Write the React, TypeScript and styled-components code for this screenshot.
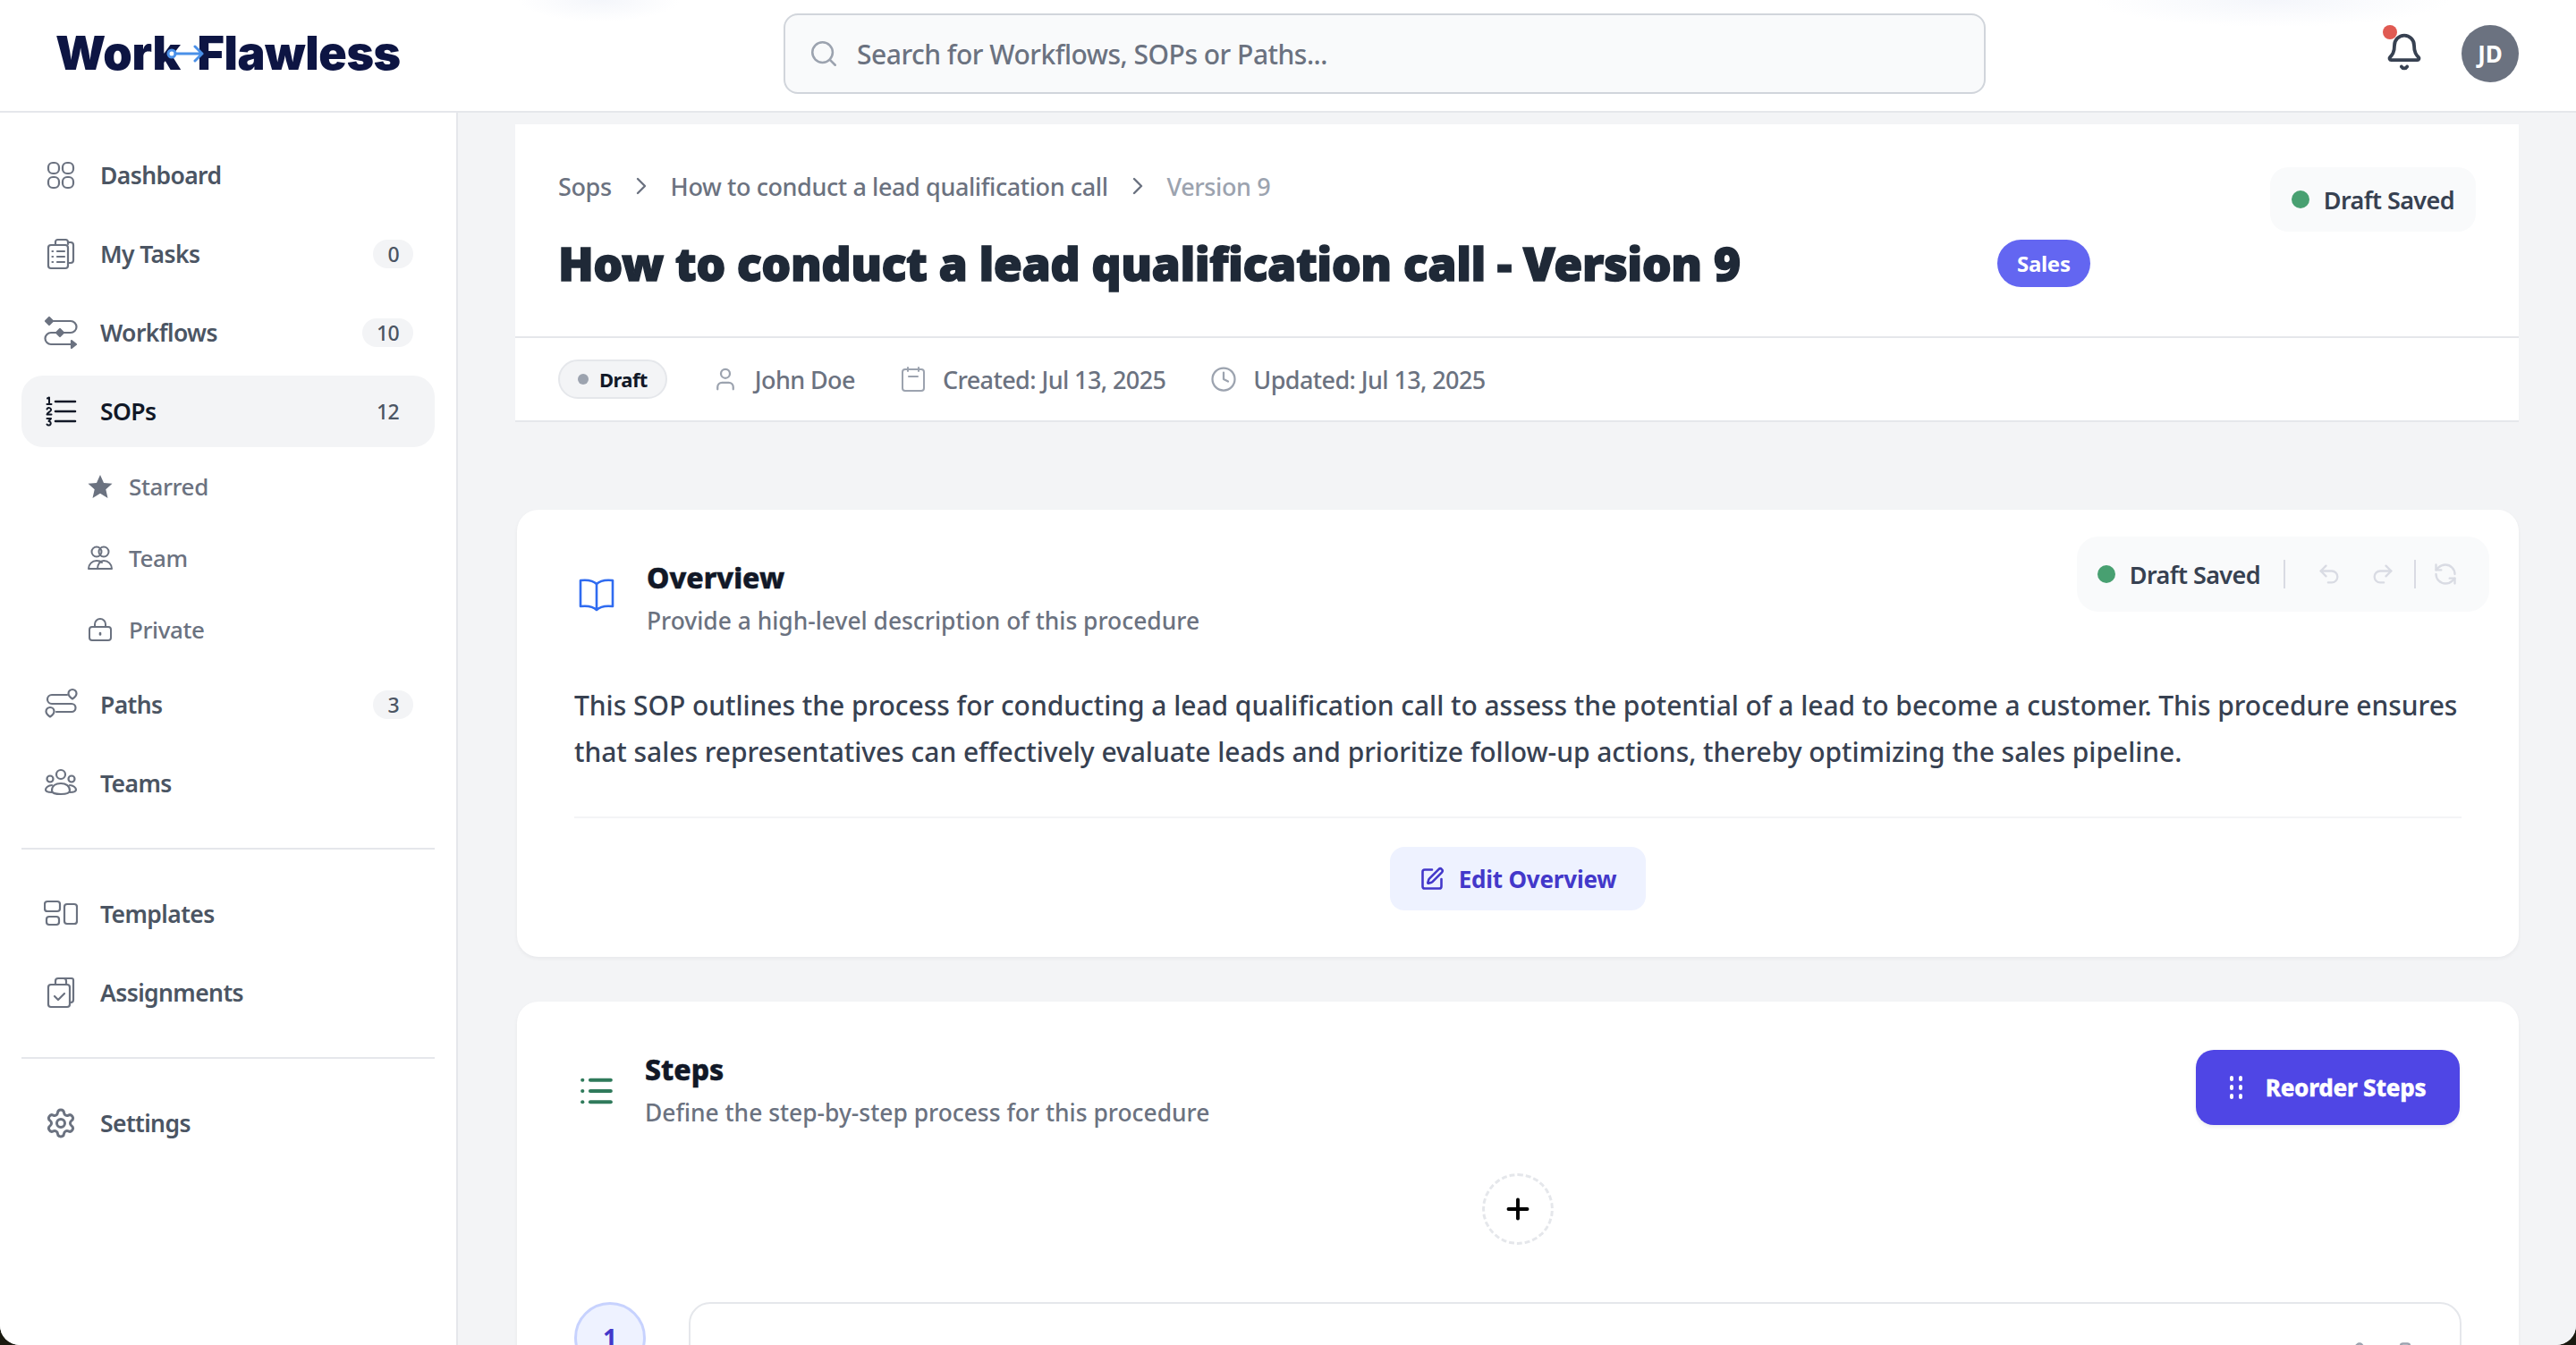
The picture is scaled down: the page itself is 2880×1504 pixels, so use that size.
import * as React from "react";
import styled, { createGlobalStyle } from "styled-components";
import {
  Bell,
  ChevronRight,
  Clock,
  List,
  Pencil,
  Plus,
  Redo2,
  RefreshCcw,
  Search,
  Settings,
  SquarePen,
  Trash2,
  Undo2,
  User,
} from "lucide-react";

const GlobalStyle = createGlobalStyle`
  html, body {
    margin: 0;
    padding: 0;
    width: 2880px;
    height: 1504px;
    overflow: hidden;
    background: #1a1a10;
  }
  * { box-sizing: border-box; }
  body {
    font-family: "Noto Sans", "Open Sans", sans-serif;
    color: #111827;
  }
`;

const Shell = styled.div`
  width: 2880px;
  height: 1504px;
  background: #fff;
  border-radius: 0 0 22px 22px;
  overflow: hidden;
  display: flex;
  flex-direction: column;
`;

const TopBar = styled.header`
  flex: 0 0 126px;
  display: grid;
  grid-template-columns: 812px 1344px 1fr;
  align-items: center;
  padding: 0 64px 4px;
  border-bottom: 2px solid #e5e7eb;
  background:
    radial-gradient(90px 24px at 670px 0, #f4f6fb, transparent),
    radial-gradient(200px 30px at 2540px 0, #f4f6fb, transparent),
    #fff;
`;

const Logo = styled.div`
  position: relative;
  width: 384px;
  margin-left: -2px;
  display: flex;
  gap: 19px;
  font-family: Inter, sans-serif;
  font-size: 52px;
  line-height: 60px;
  font-weight: 900;
  letter-spacing: -0.4px;
  color: #0d1543;
`;

const LogoArrow = styled.svg`
  position: absolute;
  left: 124px;
  top: 18px;
  width: 42px;
  height: 24px;
`;

const SearchBox = styled.div`
  height: 90px;
  display: flex;
  align-items: center;
  gap: 20px;
  padding: 0 26px;
  background: #f9fafb;
  border: 2px solid #d1d5db;
  border-radius: 16px;
  color: #6b7280;
  font-size: 30px;
  font-weight: 500;
  letter-spacing: -0.5px;
  svg { color: #9ca3af; flex: none; }
`;

const TopActions = styled.div`
  display: flex;
  justify-content: flex-end;
  align-items: center;
  gap: 38px;
`;

const BellWrap = styled.div`
  position: relative;
  width: 48px;
  height: 48px;
  color: #374151;
`;

const BellDot = styled.span`
  position: absolute;
  left: -2px;
  top: -8px;
  width: 16px;
  height: 16px;
  border-radius: 50%;
  background: #e05a52;
`;

const Avatar = styled.div`
  width: 64px;
  height: 64px;
  border-radius: 50%;
  background: #6b7280;
  color: #fff;
  font-size: 26px;
  font-weight: 700;
  display: flex;
  align-items: center;
  justify-content: center;
`;

const Body = styled.div`
  flex: 1;
  min-height: 0;
  display: flex;
`;

const Sidebar = styled.nav`
  flex: 0 0 512px;
  border-right: 2px solid #e5e7eb;
  padding: 30px 24px 0;
  background: #fff;
`;

const NavIcon = styled.span<{ $w: number }>`
  flex: 0 0 ${(p) => p.$w}px;
  display: flex;
  align-items: center;
  justify-content: center;
`;

const NavRow = styled.div<{ $active?: boolean }>`
  height: 80px;
  margin-bottom: 8px;
  padding: 0 24px;
  display: flex;
  align-items: center;
  gap: 24px;
  border-radius: 24px;
  background: ${(p) => (p.$active ? "#f3f4f6" : "transparent")};
  color: ${(p) => (p.$active ? "#111827" : "#4b5563")};
  font-size: 26.5px;
  font-weight: 600;
  letter-spacing: -0.6px;
  svg {
    flex: none;
    color: ${(p) => (p.$active ? "#111827" : "#6b7280")};
  }
`;

const NavLabel = styled.span`
  flex: 1;
`;

const Count = styled.span<{ $plain?: boolean }>`
  height: 32px;
  min-width: 44px;
  padding: 0 16px;
  border-radius: 16px;
  background: ${(p) => (p.$plain ? "transparent" : "#f3f4f6")};
  color: #4b5563;
  font-size: 23px;
  font-weight: 500;
  display: flex;
  align-items: center;
  justify-content: center;
`;

const SubList = styled.div`
  display: flex;
  flex-direction: column;
  margin-top: -4px;
  margin-bottom: 4px;
`;

const SubRow = styled.div`
  height: 80px;
  padding-left: 72px;
  display: flex;
  align-items: center;
  gap: 16px;
  color: #6b7280;
  font-size: 26px;
  font-weight: 500;
  letter-spacing: -0.4px;
  svg { flex: none; }
`;

const NavRule = styled.hr`
  border: 0;
  height: 2px;
  background: #e5e7eb;
  margin: 32px 0;
`;

const Main = styled.main`
  flex: 1;
  min-width: 0;
  background: #f3f4f6;
  padding: 13px 64px 0;
  overflow: hidden;
  display: flex;
  flex-direction: column;
`;

const PageHead = styled.section`
  background: #fff;
  border-bottom: 2px solid #e5e7eb;
  flex: none;
`;

const HeadTop = styled.div`
  position: relative;
  height: 239px;
  border-bottom: 2px solid #e5e7eb;
  padding: 47px 48px 0;
`;

const Crumbs = styled.div`
  display: flex;
  align-items: center;
  gap: 17px;
  height: 44px;
  font-size: 27px;
  font-weight: 500;
  letter-spacing: -0.4px;
  color: #6b7280;
`;

const CrumbLast = styled.span`
  color: #9ca3af;
`;

const TitleRow = styled.div`
  display: flex;
  align-items: center;
  margin-top: 28px;
`;

const PageTitle = styled.h1`
  flex: 0 0 1609px;
  margin: 0;
  font-size: 52px;
  line-height: 72px;
  font-weight: 900;
  letter-spacing: -0.5px;
  -webkit-text-stroke: 1.4px #1f2937;
  color: #1f2937;
`;

const Tag = styled.span`
  height: 53px;
  padding: 0 22px;
  border-radius: 27px;
  background: #6366f1;
  color: #fff;
  font-size: 24px;
  font-weight: 700;
  letter-spacing: -0.3px;
  display: flex;
  align-items: center;
`;

const SavedPill = styled.div`
  position: absolute;
  right: 48px;
  top: 48px;
  height: 72px;
  padding: 0 24px;
  display: flex;
  align-items: center;
  gap: 16px;
  border-radius: 20px;
  background: #f9fafb;
  color: #374151;
  font-size: 27px;
  font-weight: 600;
  letter-spacing: -0.6px;
`;

const GreenDot = styled.span`
  width: 20px;
  height: 20px;
  border-radius: 50%;
  background: #48a071;
  flex: none;
`;

const MetaRow = styled.div`
  height: 92px;
  padding: 0 48px;
  display: flex;
  align-items: center;
  color: #6b7280;
  font-size: 27px;
  font-weight: 500;
  letter-spacing: -0.6px;
`;

const StatusChip = styled.span`
  height: 44px;
  padding: 0 20px;
  margin-right: 50px;
  display: flex;
  align-items: center;
  gap: 12px;
  border: 2px solid #e5e7eb;
  border-radius: 22px;
  background: #f3f4f6;
  color: #111827;
  font-size: 22px;
  font-weight: 700;
  &::before {
    content: "";
    width: 12px;
    height: 12px;
    border-radius: 50%;
    background: #9ca3af;
  }
`;

const MetaItem = styled.span`
  display: flex;
  align-items: center;
  gap: 18px;
  margin-right: 50px;
  svg { color: #9ca3af; }
`;

const Card = styled.section`
  position: relative;
  flex: none;
  background: #fff;
  border-radius: 24px;
  margin-top: 50px;
  margin-left: 2px;
  padding: 0 64px;
  box-shadow: 0 2px 4px rgba(17, 24, 39, 0.05);
`;

const OverviewCard = styled(Card)`
  margin-top: 98px;
  height: 500px;
`;

const StepsCard = styled(Card)`
  height: 600px;
`;

const CardHead = styled.div<{ $top: number }>`
  display: flex;
  align-items: center;
  gap: 33px;
  padding: ${(p) => p.$top}px 0 0 4px;
`;

const CardTitles = styled.div`
  display: flex;
  flex-direction: column;
`;

const CardTitle = styled.h2`
  margin: 0;
  font-size: 32px;
  line-height: 48px;
  font-weight: 800;
  -webkit-text-stroke: 0.5px #111827;
  color: #111827;
`;

const CardSub = styled.p`
  margin: 0;
  font-size: 26.4px;
  line-height: 48px;
  font-weight: 500;
  color: #6b7280;
`;

const EditorTools = styled.div`
  position: absolute;
  right: 33px;
  top: 30px;
  height: 84px;
  padding: 0 35px 0 23px;
  display: flex;
  align-items: center;
  border-radius: 24px;
  background: #f9fafb;
  color: #374151;
  font-size: 27px;
  font-weight: 600;
  letter-spacing: -0.6px;
  svg { color: #d9dbe3; }
`;

const ToolLabel = styled.span`
  margin: 0 26px 0 16px;
`;

const ToolSep = styled.span<{ $gapRight: number }>`
  width: 2px;
  height: 32px;
  background: #d9dbe3;
  margin-right: ${(p) => p.$gapRight}px;
`;

const ToolIcon = styled.span<{ $gapRight: number }>`
  display: flex;
  margin-right: ${(p) => p.$gapRight}px;
`;

const BodyText = styled.p`
  margin: 0;
  padding-top: 45px;
  font-size: 30px;
  line-height: 52px;
  font-weight: 500;
  letter-spacing: -0.04px;
  color: #374151;
`;

const CardRule = styled.hr`
  border: 0;
  height: 2px;
  margin: 46px 0 32px;
  background: #f3f4f6;
`;

const Center = styled.div<{ $top?: number }>`
  display: flex;
  justify-content: center;
  margin-top: ${(p) => p.$top ?? 0}px;
`;

const EditButton = styled.button`
  height: 71px;
  width: 286px;
  border: 0;
  border-radius: 16px;
  background: #eef2ff;
  color: #4338ca;
  font: 700 26px "Noto Sans", sans-serif;
  letter-spacing: -0.2px;
  display: flex;
  align-items: center;
  justify-content: center;
  gap: 16px;
`;

const ReorderButton = styled.button`
  position: absolute;
  right: 66px;
  top: 54px;
  width: 295px;
  height: 84px;
  border: 0;
  border-radius: 20px;
  background: #4f46e5;
  color: #fff;
  font: 800 26px "Noto Sans", sans-serif;
  letter-spacing: -0.3px;
  -webkit-text-stroke: 0.3px #fff;
  display: flex;
  align-items: center;
  justify-content: center;
  gap: 26px;
  box-shadow: 0 2px 4px rgba(17, 24, 39, 0.08);
`;

const AddCircle = styled.div`
  width: 80px;
  height: 80px;
  border: 3px dashed #e5e7eb;
  border-radius: 50%;
  color: #000;
  display: flex;
  align-items: center;
  justify-content: center;
`;

const StepRow = styled.div`
  display: flex;
  gap: 48px;
  margin-top: 64px;
`;

const StepNumber = styled.div`
  flex: 0 0 80px;
  height: 80px;
  border-radius: 50%;
  border: 3px solid #c7d2fe;
  background: #eef2ff;
  color: #4338ca;
  font-size: 28px;
  font-weight: 700;
  display: flex;
  align-items: center;
  justify-content: center;
`;

const StepBox = styled.div`
  flex: 1;
  height: 300px;
  border: 2px solid #e5e7eb;
  border-radius: 24px;
  padding: 42px 46px;
  display: flex;
  justify-content: flex-end;
  gap: 30px;
  color: #9ca3af;
`;

// hand-drawn icons, the packages have nothing that close for these
const IconSvg = ({ size = 36, width = 2.2, children }: { size?: number; width?: number; children: React.ReactNode }) => (
  <svg width={size} height={size} viewBox={`0 0 ${size} ${size}`} fill="none" stroke="currentColor" strokeWidth={width} strokeLinecap="round" strokeLinejoin="round">
    {children}
  </svg>
);

const GridIcon = () => (
  <IconSvg>
    <rect x="4" y="4" width="12" height="12" rx="5" />
    <rect x="20" y="4" width="12" height="12" rx="5" />
    <rect x="4" y="20" width="12" height="12" rx="5" />
    <rect x="20" y="20" width="12" height="12" rx="5" />
  </IconSvg>
);

const TasksIcon = () => (
  <IconSvg>
    <path d="M12 7V4.5A2.5 2.5 0 0 1 14.5 2h9A2.5 2.5 0 0 1 26 4.5V7" />
    <path d="M27 5h2a3 3 0 0 1 3 3v17a3 3 0 0 1-3 3h-3" />
    <rect x="4" y="8" width="22" height="26" rx="3" />
    <path d="M14 15h8M14 21h8M14 27h8" />
    <path d="M8.5 15h.6M8.5 21h.6M8.5 27h.6" />
  </IconSvg>
);

const FlowIcon = () => (
  <IconSvg size={38}>
    <path d="M6 2l4 4-4 4-4-4zM18 15l4 4-4 4-4-4z" fill="currentColor" />
    <path d="M10 6h20a6.5 6.5 0 0 1 0 13H22" />
    <path d="M14 19H8a6.5 6.5 0 0 0 0 13h24" />
    <path d="M31 28l5 4-5 4z" fill="currentColor" />
  </IconSvg>
);

const SopsIcon = () => (
  <IconSvg>
    <path d="M12 7h22M12 18h22M12 29h22" strokeWidth="2.6" />
    <path d="M3 3.5l2-1V10M2.5 10h5" strokeWidth="2" />
    <path d="M2.5 15.5a2.4 2.4 0 0 1 4.6 1c0 1.5-4.6 3-4.6 5h5" strokeWidth="2" />
    <path d="M2.5 26h4.5l-2.5 3a2.3 2.3 0 1 1-2 3.5" strokeWidth="2" />
  </IconSvg>
);

const StarIcon = () => (
  <svg width="30" height="30" viewBox="0 0 30 30" fill="currentColor">
    <polygon points="15,2 19,11 28.5,11.8 21.3,18.2 23.5,28 15,22.8 6.5,28 8.7,18.2 1.5,11.8 11,11" />
  </svg>
);

const TeamIcon = () => (
  <IconSvg size={30} width={2}>
    <circle cx="11" cy="8" r="5.5" />
    <circle cx="19" cy="8" r="5.5" />
    <path d="M2 27c0-5 4-9 9-9 3 0 5 1 6 2M28 27c0-5-4-9-9-9-4 0-7 4-7 9M2 27h26" />
  </IconSvg>
);

const LockIcon = () => (
  <IconSvg size={30} width={2}>
    <rect x="3" y="12" width="24" height="15" rx="3" />
    <path d="M9 12V9a6 6 0 0 1 12 0v3" />
    <path d="M15 19v1.5" strokeWidth="2.6" />
  </IconSvg>
);

const PathsIcon = () => (
  <IconSvg size={38}>
    <path d="M26 8H9a5 5 0 0 0 0 10h22a4.5 4.5 0 0 1 0 9H14" />
    <path d="M32 2a4.5 4.5 0 0 1 4.5 4.5c0 3-4.5 6-4.5 6s-4.5-3-4.5-6A4.5 4.5 0 0 1 32 2z" />
    <path d="M7 22a4.5 4.5 0 0 1 4.5 4.5c0 3-4.5 6-4.5 6s-4.5-3-4.5-6A4.5 4.5 0 0 1 7 22z" />
  </IconSvg>
);

const TeamsIcon = () => (
  <IconSvg size={38}>
    <circle cx="19" cy="9" r="5" />
    <circle cx="7" cy="14" r="3.5" />
    <circle cx="31" cy="14" r="3.5" />
    <path d="M9 27c0-5 4-8 10-8s10 3 10 8c0 3-4 4-10 4s-10-1-10-4z" />
    <path d="M9 21c-4 0-7 3-7 5s3 3 7 3M29 21c4 0 7 3 7 5s-3 3-7 3" />
  </IconSvg>
);

const TemplatesIcon = () => (
  <IconSvg size={38}>
    <rect x="1" y="5" width="17" height="11" rx="3" />
    <rect x="3" y="22" width="14" height="9" rx="3" />
    <rect x="23" y="8" width="14" height="22" rx="3" />
  </IconSvg>
);

const AssignIcon = () => (
  <IconSvg>
    <path d="M12 9V5a3 3 0 0 1 3-3h6a3 3 0 0 1 3 3v4" />
    <path d="M22 2h8a2 2 0 0 1 2 2v22a3 3 0 0 1-3 3h-1" />
    <rect x="4" y="9" width="24" height="25" rx="3" />
    <path d="M11 22l4 4 7-7" />
  </IconSvg>
);

const CalendarIcon = () => (
  <IconSvg size={30} width={2}>
    <rect x="3" y="4" width="24" height="24" rx="3" />
    <path d="M9 2v4M21 2v4M10 12h10" />
  </IconSvg>
);

const BookIcon = () => (
  <svg width="44" height="44" viewBox="1 5 44 44" overflow="visible" fill="none" stroke="#2f6bf0" strokeWidth="2.6" strokeLinejoin="round" strokeLinecap="round">
    <path d="M22 10c-3-3-9-5-18-4v29c9-1 15 1 18 4 3-3 9-5 18-4V6c-9-1-15 1-18 4zM22 10v29" />
  </svg>
);

const DotsIcon = () => (
  <svg width="14" height="26" viewBox="0 0 14 26" fill="#fff" stroke="none">
    <rect x="0" y="0" width="4" height="6" rx="2" />
    <rect x="10" y="0" width="4" height="6" rx="2" />
    <rect x="0" y="10" width="4" height="6" rx="2" />
    <rect x="10" y="10" width="4" height="6" rx="2" />
    <rect x="0" y="20" width="4" height="6" rx="2" />
    <rect x="10" y="20" width="4" height="6" rx="2" />
  </svg>
);

export default function App() {
  return (
    <>
      <GlobalStyle />
      <Shell>
        <TopBar>
          <Logo>
            <span>Work</span>
            <span>Flawless</span>
            <LogoArrow viewBox="0 0 42 24" fill="none" stroke="#4a90e8" strokeWidth="3" strokeLinecap="round" strokeLinejoin="round">
              <circle cx="6" cy="12" r="4" fill="#fff" />
              <path d="M10 12h30M32 4l8 8-8 8" />
            </LogoArrow>
          </Logo>
          <SearchBox>
            <Search size={34} strokeWidth={1.8} />
            Search for Workflows, SOPs or Paths...
          </SearchBox>
          <TopActions>
            <BellWrap>
              <Bell size={44} strokeWidth={2.1} />
              <BellDot />
            </BellWrap>
            <Avatar>JD</Avatar>
          </TopActions>
        </TopBar>
        <Body>
          <Sidebar>
            <NavRow><NavIcon $w={40}><GridIcon /></NavIcon><NavLabel>Dashboard</NavLabel></NavRow>
            <NavRow><NavIcon $w={40}><TasksIcon /></NavIcon><NavLabel>My Tasks</NavLabel><Count>0</Count></NavRow>
            <NavRow><NavIcon $w={40}><FlowIcon /></NavIcon><NavLabel>Workflows</NavLabel><Count>10</Count></NavRow>
            <NavRow $active><NavIcon $w={40}><SopsIcon /></NavIcon><NavLabel>SOPs</NavLabel><Count $plain>12</Count></NavRow>
            <SubList>
              <SubRow><NavIcon $w={32}><StarIcon /></NavIcon>Starred</SubRow>
              <SubRow><NavIcon $w={32}><TeamIcon /></NavIcon>Team</SubRow>
              <SubRow><NavIcon $w={32}><LockIcon /></NavIcon>Private</SubRow>
            </SubList>
            <NavRow><NavIcon $w={40}><PathsIcon /></NavIcon><NavLabel>Paths</NavLabel><Count>3</Count></NavRow>
            <NavRow><NavIcon $w={40}><TeamsIcon /></NavIcon><NavLabel>Teams</NavLabel></NavRow>
            <NavRule />
            <NavRow><NavIcon $w={40}><TemplatesIcon /></NavIcon><NavLabel>Templates</NavLabel></NavRow>
            <NavRow><NavIcon $w={40}><AssignIcon /></NavIcon><NavLabel>Assignments</NavLabel></NavRow>
            <NavRule />
            <NavRow><NavIcon $w={40}><Settings size={36} strokeWidth={2} /></NavIcon><NavLabel>Settings</NavLabel></NavRow>
          </Sidebar>
          <Main>
            <PageHead>
              <HeadTop>
                <Crumbs>
                  <span>Sops</span>
                  <ChevronRight size={32} strokeWidth={1.8} />
                  <span>How to conduct a lead qualification call</span>
                  <ChevronRight size={32} strokeWidth={1.8} />
                  <CrumbLast>Version 9</CrumbLast>
                </Crumbs>
                <TitleRow>
                  <PageTitle>How to conduct a lead qualification call - Version 9</PageTitle>
                  <Tag>Sales</Tag>
                </TitleRow>
                <SavedPill><GreenDot />Draft Saved</SavedPill>
              </HeadTop>
              <MetaRow>
                <StatusChip>Draft</StatusChip>
                <MetaItem><User size={30} strokeWidth={1.8} />John Doe</MetaItem>
                <MetaItem><CalendarIcon />Created: Jul 13, 2025</MetaItem>
                <MetaItem><Clock size={30} strokeWidth={1.8} />Updated: Jul 13, 2025</MetaItem>
              </MetaRow>
            </PageHead>
            <OverviewCard>
              <CardHead $top={52}>
                <BookIcon />
                <CardTitles>
                  <CardTitle>Overview</CardTitle>
                  <CardSub>Provide a high-level description of this procedure</CardSub>
                </CardTitles>
              </CardHead>
              <EditorTools>
                <GreenDot />
                <ToolLabel>Draft Saved</ToolLabel>
                <ToolSep $gapRight={35} />
                <ToolIcon $gapRight={32}><Undo2 size={28} /></ToolIcon>
                <ToolIcon $gapRight={21}><Redo2 size={28} /></ToolIcon>
                <ToolSep $gapRight={19} />
                <RefreshCcw size={28} />
              </EditorTools>
              <BodyText>
                This SOP outlines the process for conducting a lead qualification call to assess the potential of a lead to become a customer. This procedure ensures that sales representatives can effectively evaluate leads and prioritize follow-up actions, thereby optimizing the sales pipeline.
              </BodyText>
              <CardRule />
              <Center>
                <EditButton><SquarePen size={28} strokeWidth={2.2} />Edit Overview</EditButton>
              </Center>
            </OverviewCard>
            <StepsCard>
              <CardHead $top={52}>
                <List size={42} color="#2f7a5b" strokeWidth={2.4} />
                <CardTitles>
                  <CardTitle>Steps</CardTitle>
                  <CardSub>Define the step-by-step process for this procedure</CardSub>
                </CardTitles>
              </CardHead>
              <ReorderButton><DotsIcon />Reorder Steps</ReorderButton>
              <Center $top={44}>
                <AddCircle><Plus size={36} strokeWidth={2.6} /></AddCircle>
              </Center>
              <StepRow>
                <StepNumber>1</StepNumber>
                <StepBox>
                  <Pencil size={30} strokeWidth={2} />
                  <Trash2 size={30} strokeWidth={2} />
                </StepBox>
              </StepRow>
            </StepsCard>
          </Main>
        </Body>
      </Shell>
    </>
  );
}
